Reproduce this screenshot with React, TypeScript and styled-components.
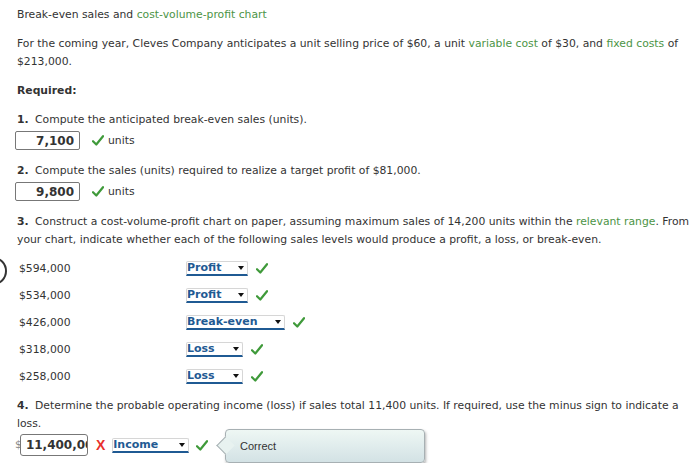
import styled, { createGlobalStyle } from "styled-components"

const GlobalStyle = createGlobalStyle`
  html, body {
    margin: 0;
    padding: 0;
    background: #fff;
  }
  body {
    font-family: Verdana, "DejaVu Sans", sans-serif;
    font-size: 10.8px;
    color: #333;
  }
`

interface Level {
  amount: string
  answer: string
  width: number
}

const levels: Level[] = [
  { amount: "$594,000", answer: "Profit", width: 62 },
  { amount: "$534,000", answer: "Profit", width: 62 },
  { amount: "$426,000", answer: "Break-even", width: 99 },
  { amount: "$318,000", answer: "Loss", width: 57 },
  { amount: "$258,000", answer: "Loss", width: 57 },
]

function Check({ gap = 8 }: { gap?: number }) {
  return (
    <Mark $gap={gap} viewBox="0 0 12 11" width="12" height="11">
      <path d="M1 6.2 L4.3 9.5 L11 1.2" fill="none" stroke="#3f9a3a" strokeWidth="2.2" strokeLinecap="round" strokeLinejoin="round" />
    </Mark>
  )
}

function Dropdown({ label, width }: { label: string; width: number }) {
  return (
    <Select $width={width}>
      <SelectText>{label}</SelectText>
      <Arrow />
    </Select>
  )
}

export default function App() {
  return (
    <>
      <GlobalStyle />
      <Page>
        <Arc />
        <div>
          Break-even sales and <Link>cost-volume-profit chart</Link>
        </div>
        <Para>
          For the coming year, Cleves Company anticipates a unit selling price of $60, a unit{" "}
          <Link>variable cost</Link> of $30, and <Link>fixed costs</Link> of $213,000.
        </Para>
        <Required>Required:</Required>

        <Question>
          <Num>1.</Num> Compute the anticipated break-even sales (units).
        </Question>
        <AnswerRow>
          <Input readOnly value="7,100" />
          <Check gap={12} />
          <Unit>units</Unit>
        </AnswerRow>

        <Question $top={12}>
          <Num>2.</Num> Compute the sales (units) required to realize a target profit of $81,000.
        </Question>
        <AnswerRow>
          <Input readOnly value="9,800" />
          <Check gap={12} />
          <Unit>units</Unit>
        </AnswerRow>

        <Question $top={12}>
          <Num>3.</Num> Construct a cost-volume-profit chart on paper, assuming maximum sales of 14,200 units
          within the <Link>relevant range</Link>. From your chart, indicate whether each of the following sales
          levels would produce a profit, a loss, or break-even.
        </Question>
        <Levels>
          {levels.map((l, i) => (
            <LevelRow key={i}>
              <Amount>{l.amount}</Amount>
              <Dropdown label={l.answer} width={l.width} />
              <Check />
            </LevelRow>
          ))}
        </Levels>

        <Question $top={7}>
          <Num>4.</Num> Determine the probable operating income (loss) if sales total 11,400 units. If required,
          use the minus sign to indicate a loss.
        </Question>
        <IncomeRow>
          <Dollar>$</Dollar>
          <WideInput readOnly value="11,400,000" />
          <Cross>X</Cross>
          <Dropdown label="Income" width={77} />
          <Check gap={7} />
          <Tip>Correct</Tip>
        </IncomeRow>
      </Page>
    </>
  )
}

//style

const Page = styled.div`
  position: relative;
  width: 693px;
  height: 463px;
  box-sizing: border-box;
  padding: 6px 0 0 17px;
  overflow: hidden;
  line-height: 18px;
`

const Arc = styled.div`
  position: absolute;
  left: -20px;
  top: 257px;
  width: 23px;
  height: 24px;
  border: 2px solid #333;
  border-radius: 50%;
`

const Link = styled.span`
  color: #4c9446;
`

const Para = styled.div`
  margin-top: 11px;
`

const Required = styled.div`
  margin-top: 11px;
  font-weight: bold;
`

const Question = styled.div<{ $top?: number }>`
  margin-top: ${(p) => p.$top ?? 11}px;
`

const Num = styled.span`
  font-weight: bold;
  margin-right: 3px;
`

const AnswerRow = styled.div`
  display: flex;
  align-items: center;
  margin: 2px 0 0 -2px;
  height: 19px;
`

const Input = styled.input`
  box-sizing: border-box;
  width: 65px;
  height: 19px;
  margin: 0;
  border: 1px solid #777;
  border-radius: 2px;
  padding: 0 5px 0 0;
  text-align: right;
  font-family: Verdana, "DejaVu Sans", sans-serif;
  font-weight: bold;
  font-size: 12px;
  color: #333;
  background: #fff;
  outline: none;
`

const Mark = styled.svg<{ $gap: number }>`
  display: block;
  flex: none;
  margin-left: ${(p) => p.$gap}px;
`

const Unit = styled.span`
  margin-left: 4px;
`

const Levels = styled.div`
  margin-top: 6px;
  padding-left: 2px;
`

const LevelRow = styled.div`
  display: flex;
  align-items: center;
  height: 27px;
`

const Amount = styled.span`
  width: 167px;
`

const Select = styled.div<{ $width: number }>`
  position: relative;
  box-sizing: border-box;
  display: flex;
  align-items: center;
  width: ${(p) => p.$width}px;
  height: 15px;
  border: 1px solid #d6d6d6;
  border-bottom: 2px solid #1f5a93;
  border-radius: 2px 2px 0 0;
  background: #fff;
`

const SelectText = styled.span`
  font-weight: bold;
  color: #1f5a93;
  font-size: 11px;
  line-height: 12px;
`

const Arrow = styled.span`
  position: absolute;
  right: 3px;
  top: 4px;
  width: 0;
  height: 0;
  border-left: 3px solid transparent;
  border-right: 3px solid transparent;
  border-top: 4px solid #111;
`

const IncomeRow = styled.div`
  position: relative;
  display: flex;
  align-items: center;
  height: 22px;
  margin-top: 1px;
  margin-left: -2px;
`

const Dollar = styled.span`
  color: #888;
`

const WideInput = styled.input`
  box-sizing: border-box;
  width: 68px;
  height: 22px;
  margin: 0 0 0 -2px;
  border: 1px solid #777;
  border-radius: 3px;
  padding: 0 0 0 5px;
  font-family: Verdana, "DejaVu Sans", sans-serif;
  font-weight: bold;
  font-size: 12px;
  color: #333;
  background: #fff;
  outline: none;
`

const Cross = styled.span`
  margin: 0 7px 0 8px;
  color: #e8302c;
  font-family: "Liberation Sans", Arial, sans-serif;
  font-weight: bold;
  font-size: 14px;
`

const Tip = styled.div`
  position: absolute;
  left: 210px;
  top: -5px;
  box-sizing: border-box;
  width: 200px;
  height: 34px;
  padding-left: 14px;
  border: 1px solid #a7b0b3;
  border-radius: 4px;
  background: linear-gradient(#eef7f4, #d3e2e5);
  box-shadow: 1px 2px 3px rgba(0, 0, 0, 0.3);
  font-family: "Liberation Sans", Arial, sans-serif;
  font-size: 11px;
  line-height: 32px;
  color: #333;

  &::before {
    content: "";
    position: absolute;
    left: -7px;
    top: 9px;
    width: 12px;
    height: 12px;
    background: #e8f2f0;
    border-left: 1px solid #a7b0b3;
    border-bottom: 1px solid #a7b0b3;
    transform: rotate(45deg);
  }
`
